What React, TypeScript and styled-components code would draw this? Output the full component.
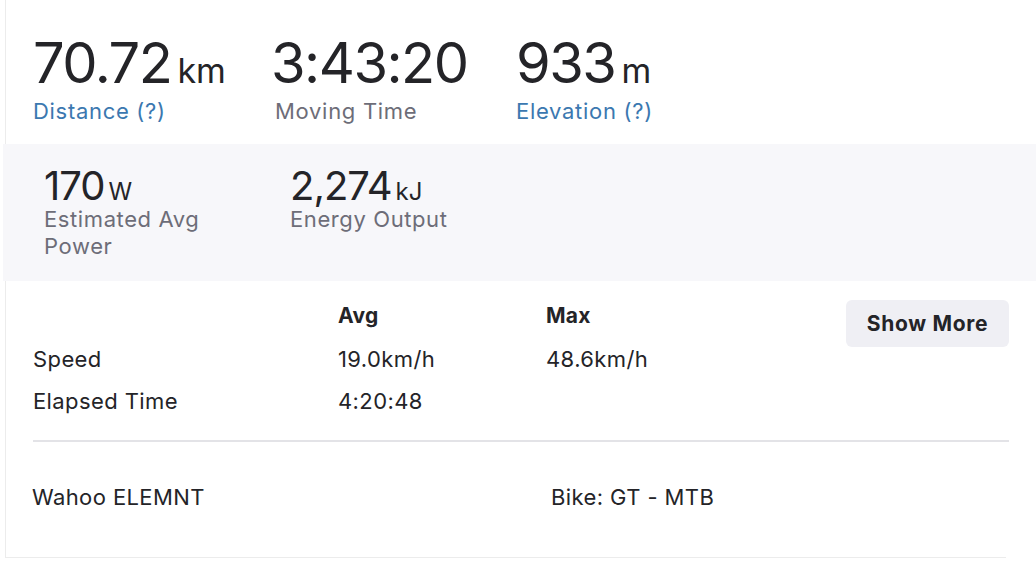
import React from "react";
import styled, { createGlobalStyle } from "styled-components";

const GlobalStyle = createGlobalStyle`
  body {
    margin: 0;
    background: #ffffff;
    font-family: Inter, "Liberation Sans", sans-serif;
    color: #242428;
  }
`;

type Stat = { value: string; unit?: string; label: string; link?: boolean };

const topStats: Stat[] = [
  { value: "70.72", unit: "km", label: "Distance (?)", link: true },
  { value: "3:43:20", label: "Moving Time" },
  { value: "933", unit: "m", label: "Elevation (?)", link: true },
];

const moreStats: Stat[] = [
  { value: "170", unit: "W", label: "Estimated Avg Power" },
  { value: "2,274", unit: "kJ", label: "Energy Output" },
];

const App = () => {
  return (
    <Page>
      <GlobalStyle />
      <TopSection>
        {topStats.map((s) => (
          <BigStat key={s.label}>
            <ValueLine>
              <BigValue>{s.value}</BigValue>
              {s.unit && <BigUnit>{s.unit}</BigUnit>}
            </ValueLine>
            <BigLabel $link={s.link}>{s.label}</BigLabel>
          </BigStat>
        ))}
      </TopSection>

      <GrayPanel>
        {moreStats.map((s) => (
          <SmallStat key={s.label}>
            <SmallValueLine>
              <SmallValue>{s.value}</SmallValue>
              {s.unit && <SmallUnit>{s.unit}</SmallUnit>}
            </SmallValueLine>
            <SmallLabel>{s.label}</SmallLabel>
          </SmallStat>
        ))}
      </GrayPanel>

      <LowerSection>
        <TableRow>
          <StatsTable>
            <HeadRow>
              <Cell />
              <HeadCell>Avg</HeadCell>
              <HeadCell>Max</HeadCell>
            </HeadRow>
            <BodyRow>
              <Cell>Speed</Cell>
              <Cell>19.0km/h</Cell>
              <Cell>48.6km/h</Cell>
            </BodyRow>
            <BodyRow>
              <Cell>Elapsed Time</Cell>
              <Cell>4:20:48</Cell>
              <Cell />
            </BodyRow>
          </StatsTable>
          <ShowMore>Show More</ShowMore>
        </TableRow>
        <Divider />
        <DeviceRow>
          <Device>Wahoo ELEMNT</Device>
          <Gear>Bike: GT - MTB</Gear>
        </DeviceRow>
      </LowerSection>
    </Page>
  );
};

export default App;

const Page = styled.div`
  width: 1036px;
  height: 564px;
  padding-left: 3px;
  box-sizing: border-box;
  overflow: hidden;
`;

const TopSection = styled.div`
  margin-left: 2px;
  border-left: 1px solid #ececec;
  height: 144px;
  box-sizing: border-box;
  padding: 35px 0 0 27px;
  display: flex;
`;

const BigStat = styled.div`
  width: 238px;
  display: flex;
  flex-direction: column;
  gap: 6px;
  &:nth-child(2) {
    width: 245px;
  }
  &:nth-child(2) > span {
    padding-left: 4px;
  }
`;

const ValueLine = styled.div`
  display: flex;
  align-items: baseline;
  gap: 6px;
`;

const BigValue = styled.span`
  font-size: 56px;
  line-height: 56px;
  font-weight: 400;
  letter-spacing: -1.5px;
`;

const BigUnit = styled.span`
  font-size: 34px;
  line-height: 34px;
`;

const BigLabel = styled.span<{ $link?: boolean }>`
  font-size: 22px;
  line-height: 28px;
  letter-spacing: 0.7px;
  color: ${(p) => (p.$link ? "#3b78b0" : "#6d6d78")};
`;

const GrayPanel = styled.div`
  height: 137px;
  background: #f7f7fa;
  box-sizing: border-box;
  padding: 20px 0 0 41px;
  display: flex;
`;

const SmallStat = styled.div`
  width: 246px;
  display: flex;
  flex-direction: column;
`;

const SmallValueLine = styled.div`
  display: flex;
  align-items: baseline;
  gap: 4px;
`;

const SmallValue = styled.span`
  font-size: 40px;
  line-height: 44px;
  letter-spacing: -1px;
`;

const SmallUnit = styled.span`
  font-size: 24px;
  line-height: 24px;
`;

const SmallLabel = styled.span`
  width: 180px;
  margin-top: -2px;
  font-size: 22px;
  line-height: 27px;
  letter-spacing: 0.6px;
  color: #6d6d78;
`;

const LowerSection = styled.div`
  margin-left: 2px;
  width: 1001px;
  height: 277px;
  border-left: 1px solid #ececec;
  border-bottom: 1px solid #ececec;
  box-sizing: border-box;
  padding: 19px 0 0 27px;
`;

const TableRow = styled.div`
  display: flex;
  justify-content: space-between;
  width: 976px;
`;

const StatsTable = styled.div`
  display: flex;
  flex-direction: column;
  padding-top: 2px;
`;

const HeadRow = styled.div`
  display: grid;
  grid-template-columns: 305px 208px 200px;
  height: 36px;
`;

const BodyRow = styled.div`
  display: grid;
  grid-template-columns: 305px 208px 200px;
  height: 42px;
  align-items: center;
`;

const Cell = styled.div`
  font-size: 22px;
  line-height: 28px;
  letter-spacing: 0.4px;
`;

const HeadCell = styled.div`
  font-size: 21px;
  line-height: 28px;
  font-weight: 700;
  letter-spacing: 0.3px;
`;

const ShowMore = styled.button`
  width: 163px;
  height: 47px;
  border: none;
  border-radius: 6px;
  background: #efeff4;
  color: #242428;
  font-family: inherit;
  font-size: 21px;
  font-weight: 700;
  letter-spacing: 0.7px;
  cursor: pointer;
`;

const Divider = styled.div`
  width: 976px;
  height: 2px;
  background: #e3e3e7;
  margin-top: 18px;
`;

const DeviceRow = styled.div`
  display: flex;
  padding-top: 41px;
`;

const Device = styled.div`
  width: 519px;
  margin-left: -1px;
  font-size: 22px;
  line-height: 28px;
  letter-spacing: 0.4px;
`;

const Gear = styled.div`
  font-size: 22px;
  line-height: 28px;
  letter-spacing: 0.4px;
`;
